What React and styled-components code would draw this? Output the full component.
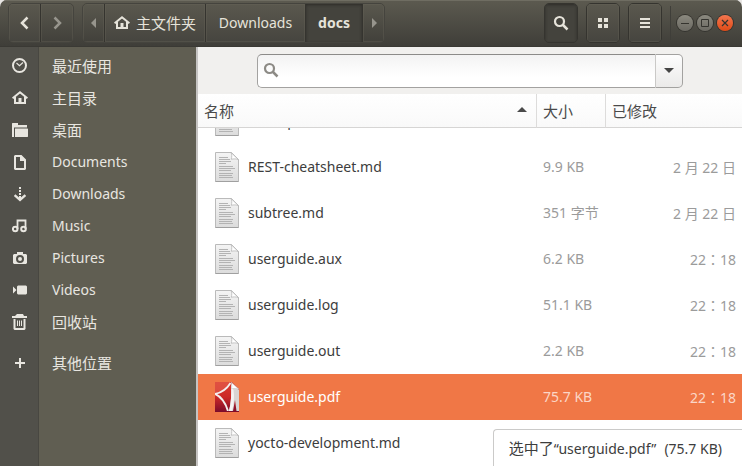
import React, { useLayoutEffect, useRef } from 'react';
import styled, { createGlobalStyle, css } from 'styled-components';

const COLOR = {
  light: '#e6e3da',
  dim: '#97958d',
  dark_border: '#35342f',
  sidebar: '#605e52',
  sidebar_strip: '#51504a',
  selected: '#f07746',
  text: '#3d3d3d',
  text_muted: '#9b9b9b',
};

const FONT = {
  latin: '14px',
  cjk: '15px',
};

const GlobalStyle = createGlobalStyle`
  * {
    box-sizing: border-box;
  }
  body {
    margin: 0;
    background: #e8e6e4;
    font-family: 'Noto Sans', 'Noto Sans CJK SC', sans-serif;
    font-size: ${FONT.latin};
    color: ${COLOR.text};
  }
  button, input {
    font: inherit;
    color: inherit;
  }
`;

const Window = styled.div`
  display: flex;
  flex-direction: column;
  height: 100vh;
  border-radius: 7px 7px 0 0;
  overflow: hidden;
`;

const HeaderBar = styled.header`
  display: flex;
  align-items: center;
  height: 47px;
  flex: none;
  padding: 0 9px 1px 8px;
  gap: 8px;
  background: linear-gradient(#5c5a50, #3f3e39);
  border-bottom: 1px solid #3a3934;
  box-shadow: inset 0 1px #6f6d62;
`;

const ButtonGroup = styled.div`
  display: flex;
  height: 40px;
  border: 1px solid ${({ $faint }) => ($faint ? '#45443e' : COLOR.dark_border)};
  border-radius: 5px;
  overflow: hidden;
`;

const HeaderButton = styled.button`
  display: flex;
  align-items: center;
  justify-content: center;
  gap: 6px;
  width: ${({ $width }) => $width || 'auto'};
  padding: 0;
  border: 0;
  border-left: 1px solid ${COLOR.dark_border};
  background: linear-gradient(#5a584e, #46453f);
  box-shadow: inset 0 0 0 1px #68665b55;
  color: ${COLOR.light};
  font-size: ${({ $cjk }) => ($cjk ? FONT.cjk : FONT.latin)};
  &:first-child {
    border-left: 0;
  }
  &:disabled {
    background: none;
    color: ${COLOR.dim};
  }
  ${({ $active }) =>
    $active &&
    css`
      background: #44433d;
      box-shadow: inset 0 1px 3px #2d2c28;
      font-weight: bold;
    `}
`;

const Tools = styled.div`
  display: flex;
  gap: 8px;
  margin-left: auto;
`;

const WindowControls = styled.div`
  display: flex;
  gap: 4px;
  padding-left: 6px;
  border-left: 1px solid #3f3e39;
  height: 34px;
  align-items: center;
`;

const ControlButton = styled.button`
  display: flex;
  align-items: center;
  justify-content: center;
  width: 16px;
  height: 16px;
  padding: 0;
  border: 0;
  border-radius: 50%;
  background: ${({ $close }) =>
    $close ? 'linear-gradient(#f4764f, #df4a16)' : 'linear-gradient(#8b897f, #6b6962)'};
  box-shadow: 0 0 0 1px #35342f;
  color: #35342f;
`;

const Body = styled.div`
  display: flex;
  flex: 1;
  min-height: 0;
`;

const Sidebar = styled.nav`
  flex: none;
  width: 198px;
  padding-top: 3px;
  border-right: 2px solid #c5c3c2;
  background: linear-gradient(
    to right,
    ${COLOR.sidebar_strip} 38px,
    #484741 38px,
    #484741 39px,
    ${COLOR.sidebar} 39px
  );
`;

const Place = styled.a`
  display: flex;
  align-items: center;
  gap: 24px;
  height: 32px;
  padding-left: 12px;
  margin-top: ${({ $spaced }) => ($spaced ? '9px' : '0')};
  color: #e8e6e0;
  font-size: ${({ $cjk }) => ($cjk ? FONT.cjk : FONT.latin)};
  text-decoration: none;
`;

const PlaceName = styled.span`
  padding-bottom: 2px;
`;

const Content = styled.main`
  position: relative;
  display: flex;
  flex-direction: column;
  flex: 1;
  min-width: 0;
  background: #fff;
`;

const SearchBar = styled.form`
  display: flex;
  justify-content: center;
  align-items: center;
  flex: none;
  height: 47px;
  background: #f1f0ee;
`;

const SearchField = styled.label`
  display: flex;
  align-items: center;
  flex: 0 1 399px;
  height: 34px;
  padding: 0 0 2px 5px;
  gap: 6px;
  border: 1px solid #a3a2a0;
  border-top-color: #8c8b89;
  border-right-color: #cac9c7;
  border-radius: 5px 0 0 5px;
  background: linear-gradient(#f3f3f3, #fff 70%);
  color: #8c8a85;
`;

const SearchInput = styled.input`
  flex: 1;
  min-width: 0;
  border: 0;
  outline: 0;
  background: none;
  color: ${COLOR.text};
`;

const FilterButton = styled.button`
  display: flex;
  align-items: center;
  justify-content: center;
  width: 27px;
  height: 34px;
  padding: 0;
  border: 1px solid #a3a2a0;
  border-left: 0;
  border-radius: 0 5px 5px 0;
  background: linear-gradient(#fdfdfd, #ebeae9);
  color: #454545;
`;

const FileList = styled.div`
  flex: 1;
  min-height: 0;
  overflow: hidden;
`;

const FileTable = styled.table`
  width: 100%;
  table-layout: fixed;
  border-collapse: separate;
  border-spacing: 0;
`;

const ColumnHead = styled.th`
  position: sticky;
  top: 0;
  width: ${({ $width }) => $width || 'auto'};
  height: 34px;
  padding: 0 6px;
  border-bottom: 1px solid #d6d5d4;
  border-right: 1px solid #dddcdb;
  background: linear-gradient(#fff, #f9f9f9);
  color: #4a4a4a;
  font-size: ${FONT.cjk};
  font-weight: normal;
  text-align: left;
  &:last-child {
    border-right: 0;
  }
`;

const HeadLabel = styled.div`
  display: flex;
  align-items: center;
  justify-content: space-between;
  padding-right: 3px;
`;

const FileRow = styled.tr`
  height: 46px;
  background: ${({ $selected }) => ($selected ? COLOR.selected : '#fff')};
  color: ${({ $selected }) => ($selected ? '#fff' : COLOR.text)};
`;

const Cell = styled.td`
  padding: 0 6px;
  white-space: nowrap;
`;

const NameCell = styled(Cell)`
  padding-left: 17px;
`;

const FileEntry = styled.div`
  display: flex;
  align-items: center;
  gap: 9px;
`;

const FileName = styled.span`
  padding-bottom: 2px;
`;

const MutedCell = styled(Cell)`
  padding-bottom: 2px;
  color: ${({ $selected }) => ($selected ? '#fbd6c7' : COLOR.text_muted)};
`;

const DateCell = styled(MutedCell)`
  padding-bottom: 0;
  font-family: 'Noto Sans', 'Noto Sans CJK TC', sans-serif;
  text-align: right;
`;

const StatusBar = styled.div`
  position: absolute;
  right: 0;
  bottom: 0;
  display: flex;
  align-items: baseline;
  height: 37px;
  padding: 0 20px 0 15px;
  border: 1px solid #cbcac9;
  border-width: 1px 0 0 1px;
  border-radius: 4px 0 0 0;
  background: #fff;
  line-height: 36px;
  white-space: nowrap;
`;

const StatusVerb = styled.span`
  font-size: ${FONT.cjk};
`;

const StatusSize = styled.span`
  margin-left: 8px;
`;

const Svg = ({ size = 16, children }) => (
  <svg width={size} height={size} viewBox={`0 0 ${size} ${size}`} fill="currentColor" aria-hidden="true">
    {children}
  </svg>
);

const line = { fill: 'none', stroke: 'currentColor', strokeWidth: 2 };

const icons = {
  back: <path d="M10.5 2.5 5 8l5.5 5.5" {...line} strokeWidth="2.5" />,
  forward: <path d="M5.5 2.5 11 8l-5.5 5.5" {...line} strokeWidth="2.5" />,
  search: (
    <>
      <circle cx="6.5" cy="6.5" r="4.5" {...line} strokeWidth="2.2" />
      <path d="m9.5 9.5 5 5" {...line} strokeWidth="2.5" />
    </>
  ),
  grid: <path d="M3 3h4v4H3zM9 3h4v4H9zM3 9h4v4H3zM9 9h4v4H9z" />,
  menu: <path d="M3 3h10v2H3zM3 7h10v2H3zM3 11h10v2H3z" />,
  recent: (
    <>
      <circle cx="7.5" cy="7.5" r="6.5" {...line} />
      <path d="m4.5 5 3 2.6L11 4.5" {...line} strokeWidth="1.2" />
    </>
  ),
  home: (
    <>
      <path d="M.6 8.2 8 2.3l7.4 5.9" {...line} />
      <path d="M3 7v6h10V7" {...line} />
      <path d="M6.5 8h3v5h-3z" />
    </>
  ),
  desktop: <path d="M0 15V1.5L.5 1H6v2h9v2.5H2V15zM3 6.5h12.5l.5.5v7.5l-.5.5H3z" />,
  documents: (
    <path
      fillRule="evenodd"
      d="M3 1h6.5L14 5.5V15l-1 1H3l-1-1V2zM4 3v11h8V7H8V3z"
    />
  ),
  downloads: (
    <>
      <path d="M7 1h2v2H7zM7 4h2v2H7zM7 7h2v2H7zM7 10h2v3H7z" />
      <path d="m2.6 9.1 5.4 4.7 5.4-4.7" {...line} strokeWidth="2.4" />
    </>
  ),
  music: (
    <>
      <circle cx="3.2" cy="11" r="2.3" {...line} />
      <circle cx="11.5" cy="11" r="2.3" {...line} />
      <path d="M5.5 11V2.5h8V11" {...line} strokeWidth="1.8" />
    </>
  ),
  pictures: (
    <path
      fillRule="evenodd"
      d="M5 2h6v2h3l1 1v8l-1 1H2l-1-1V5l1-1h3zM8 5a4 4 0 1 0 0 8 4 4 0 0 0 0-8zm0 2a2 2 0 1 1 0 4 2 2 0 0 1 0-4z"
    />
  ),
  videos: <path d="M6 3.5h8l1 1v7l-1 1H6l-1-1v-7zM1 4.5l3.5 3.5L1 11.5z" />,
  trash: (
    <path
      fillRule="evenodd"
      d="M5 0h6l1 2h3v2H0V2h3zM1.5 5h12v10l-1 1h-10l-1-1zm2 0v9h8V5zM5 6.5h1V12H5zM7 6.5h1V12H7zM9 6.5h1V12H9z"
    />
  ),
  plus: <path d="M7 3h2v4h4v2H9v4H7V9H3V7h4z" />,
};

const Icon = ({ kind }) => <Svg>{icons[kind]}</Svg>;

const DocumentIcon = () => (
  <svg width="24" height="30" viewBox="0 0 24 30" aria-hidden="true">
    <defs>
      <linearGradient id="paper" x1="0" y1="0" x2="0" y2="1">
        <stop offset="0" stopColor="#f4f4f4" />
        <stop offset="1" stopColor="#dcdcdc" />
      </linearGradient>
    </defs>
    <path d="M.5.5h16l7 7v22H.5z" fill="url(#paper)" stroke="#bababa" />
    <path d="M.5 29.5h23" stroke="#a0a0a0" />
    <path d="M16 .5c1 2 .9 4.5.3 6.8 2-.6 5-.6 7.2.4z" fill="#fff" stroke="#b8b8b8" strokeWidth=".8" />
    <path
      d="M4 5.5h9M4 7.5h11M4 9.5h12M4 11.5h7M4 14.5h14M4 16.5h16M4 18.5h12M4 21.5h14M4 23.5h13M4 25.5h14"
      stroke="#b3b3b3"
    />
  </svg>
);

const PdfIcon = () => (
  <svg width="24" height="30" viewBox="0 0 24 30" aria-hidden="true">
    <defs>
      <linearGradient id="cover" x1="0" y1="0" x2="0" y2="1">
        <stop offset="0" stopColor="#d93a2e" />
        <stop offset=".5" stopColor="#cc2927" />
        <stop offset="1" stopColor="#7d0c2b" />
      </linearGradient>
    </defs>
    <path d="M0 0h17l7 7v23H0z" fill="url(#cover)" />
    <path d="M0 0h15Q10 10 0 11z" fill="#e4604e" opacity=".6" />
    <path d="M0 12Q10 10 15.5 1" fill="none" stroke="#f3efee" strokeWidth="1.8" />
    <path d="M0 12Q9 16 13 29" fill="none" stroke="#f3efee" strokeWidth="2" />
    <path d="M16 2Q17 17 14 29h4l2-11 1.500 11H24V8z" fill="#d9d5d3" />
    <path d="M16 3Q17 17 14 29h3Q20 18 18.500 8z" fill="#f6f3f2" />
    <path d="M16 0c1 2 1 4.5.4 6.8 2-.6 5-.4 7.6.4z" fill="#fff" stroke="#bcbcbc" strokeWidth=".5" />
    <path d="M0 29.5h24" stroke="#7d0c2b" />
  </svg>
);

const places = [
  { icon: 'recent', label: '最近使用', cjk: true },
  { icon: 'home', label: '主目录', cjk: true },
  { icon: 'desktop', label: '桌面', cjk: true },
  { icon: 'documents', label: 'Documents' },
  { icon: 'downloads', label: 'Downloads' },
  { icon: 'music', label: 'Music' },
  { icon: 'pictures', label: 'Pictures' },
  { icon: 'videos', label: 'Videos' },
  { icon: 'trash', label: '回收站', cjk: true },
  { icon: 'plus', label: '其他位置', cjk: true, spaced: true },
];

const files = [
  { name: 'backup.md', size: '', modified: '' },
  { name: 'REST-cheatsheet.md', size: '9.9 KB', modified: '2 月 22 日' },
  { name: 'subtree.md', size: '351 字节', modified: '2 月 22 日' },
  { name: 'userguide.aux', size: '6.2 KB', modified: '22：18' },
  { name: 'userguide.log', size: '51.1 KB', modified: '22：18' },
  { name: 'userguide.out', size: '2.2 KB', modified: '22：18' },
  { name: 'userguide.pdf', size: '75.7 KB', modified: '22：18', selected: true },
  { name: 'yocto-development.md', size: '', modified: '' },
];

const Header = () => (
  <HeaderBar>
    <ButtonGroup $faint>
      <HeaderButton $width="31px" aria-label="后退">
        <Icon kind="back" />
      </HeaderButton>
      <HeaderButton $width="33px" aria-label="前进" disabled>
        <Icon kind="forward" />
      </HeaderButton>
    </ButtonGroup>
    <ButtonGroup $faint>
      <HeaderButton $width="21px" aria-label="向左滚动" disabled>
        <Svg size={10}>
          <path d="M7 0v10L2 5z" />
        </Svg>
      </HeaderButton>
      <HeaderButton $width="101px" $cjk>
        <Icon kind="home" />
        主文件夹
      </HeaderButton>
      <HeaderButton $width="100px">Downloads</HeaderButton>
      <HeaderButton $width="57px" $active>
        docs
      </HeaderButton>
      <HeaderButton $width="22px" aria-label="向右滚动" disabled>
        <Svg size={10}>
          <path d="M3 0v10l5-5z" />
        </Svg>
      </HeaderButton>
    </ButtonGroup>
    <Tools>
      <ButtonGroup>
        <HeaderButton $width="32px" $active aria-label="搜索">
          <Icon kind="search" />
        </HeaderButton>
      </ButtonGroup>
      <ButtonGroup>
        <HeaderButton $width="32px" aria-label="视图">
          <Icon kind="grid" />
        </HeaderButton>
      </ButtonGroup>
      <ButtonGroup>
        <HeaderButton $width="32px" aria-label="菜单">
          <Icon kind="menu" />
        </HeaderButton>
      </ButtonGroup>
    </Tools>
    <WindowControls>
      <ControlButton aria-label="最小化">
        <Svg size={10}>
          <path d="M1 5.5h8" {...line} strokeWidth="1" />
        </Svg>
      </ControlButton>
      <ControlButton aria-label="最大化">
        <Svg size={8}>
          <path d="M.5.5h7v7h-7z" {...line} strokeWidth="1" />
        </Svg>
      </ControlButton>
      <ControlButton $close aria-label="关闭">
        <Svg size={8}>
          <path d="m1 1 6 6M7 1 1 7" {...line} strokeWidth="1.2" />
        </Svg>
      </ControlButton>
    </WindowControls>
  </HeaderBar>
);

const App = () => {
  const listRef = useRef(null);

  useLayoutEffect(() => {
    listRef.current.scrollTop = listRef.current.scrollHeight;
  }, []);

  return (
    <Window>
      <GlobalStyle />
      <Header />
      <Body>
        <Sidebar>
          {places.map(({ icon, label, cjk, spaced }) => (
            <Place key={label} href={`#${icon}`} $cjk={cjk} $spaced={spaced}>
              <Icon kind={icon} />
              <PlaceName>{label}</PlaceName>
            </Place>
          ))}
        </Sidebar>
        <Content>
          <SearchBar>
            <SearchField>
              <Icon kind="search" />
              <SearchInput type="text" aria-label="搜索" />
            </SearchField>
            <FilterButton type="button" aria-label="筛选">
              <Svg size={10}>
                <path d="M0 2h10L5 7z" />
              </Svg>
            </FilterButton>
          </SearchBar>
          <FileList ref={listRef}>
            <FileTable>
              <thead>
                <tr>
                  <ColumnHead>
                    <HeadLabel>
                      名称
                      <Svg size={10}>
                        <path d="M0 6h10L5 1z" />
                      </Svg>
                    </HeadLabel>
                  </ColumnHead>
                  <ColumnHead $width="69px">大小</ColumnHead>
                  <ColumnHead $width="136px">已修改</ColumnHead>
                </tr>
              </thead>
              <tbody>
                {files.map(({ name, size, modified, selected }) => (
                  <FileRow key={name} $selected={selected}>
                    <NameCell>
                      <FileEntry>
                        {name.endsWith('.pdf') ? <PdfIcon /> : <DocumentIcon />}
                        <FileName>{name}</FileName>
                      </FileEntry>
                    </NameCell>
                    <MutedCell $selected={selected}>{size}</MutedCell>
                    <DateCell $selected={selected}>{modified}</DateCell>
                  </FileRow>
                ))}
              </tbody>
            </FileTable>
          </FileList>
          <StatusBar>
            <StatusVerb>选中了</StatusVerb>
            “userguide.pdf”
            <StatusSize>(75.7 KB)</StatusSize>
          </StatusBar>
        </Content>
      </Body>
    </Window>
  );
};

export default App;
